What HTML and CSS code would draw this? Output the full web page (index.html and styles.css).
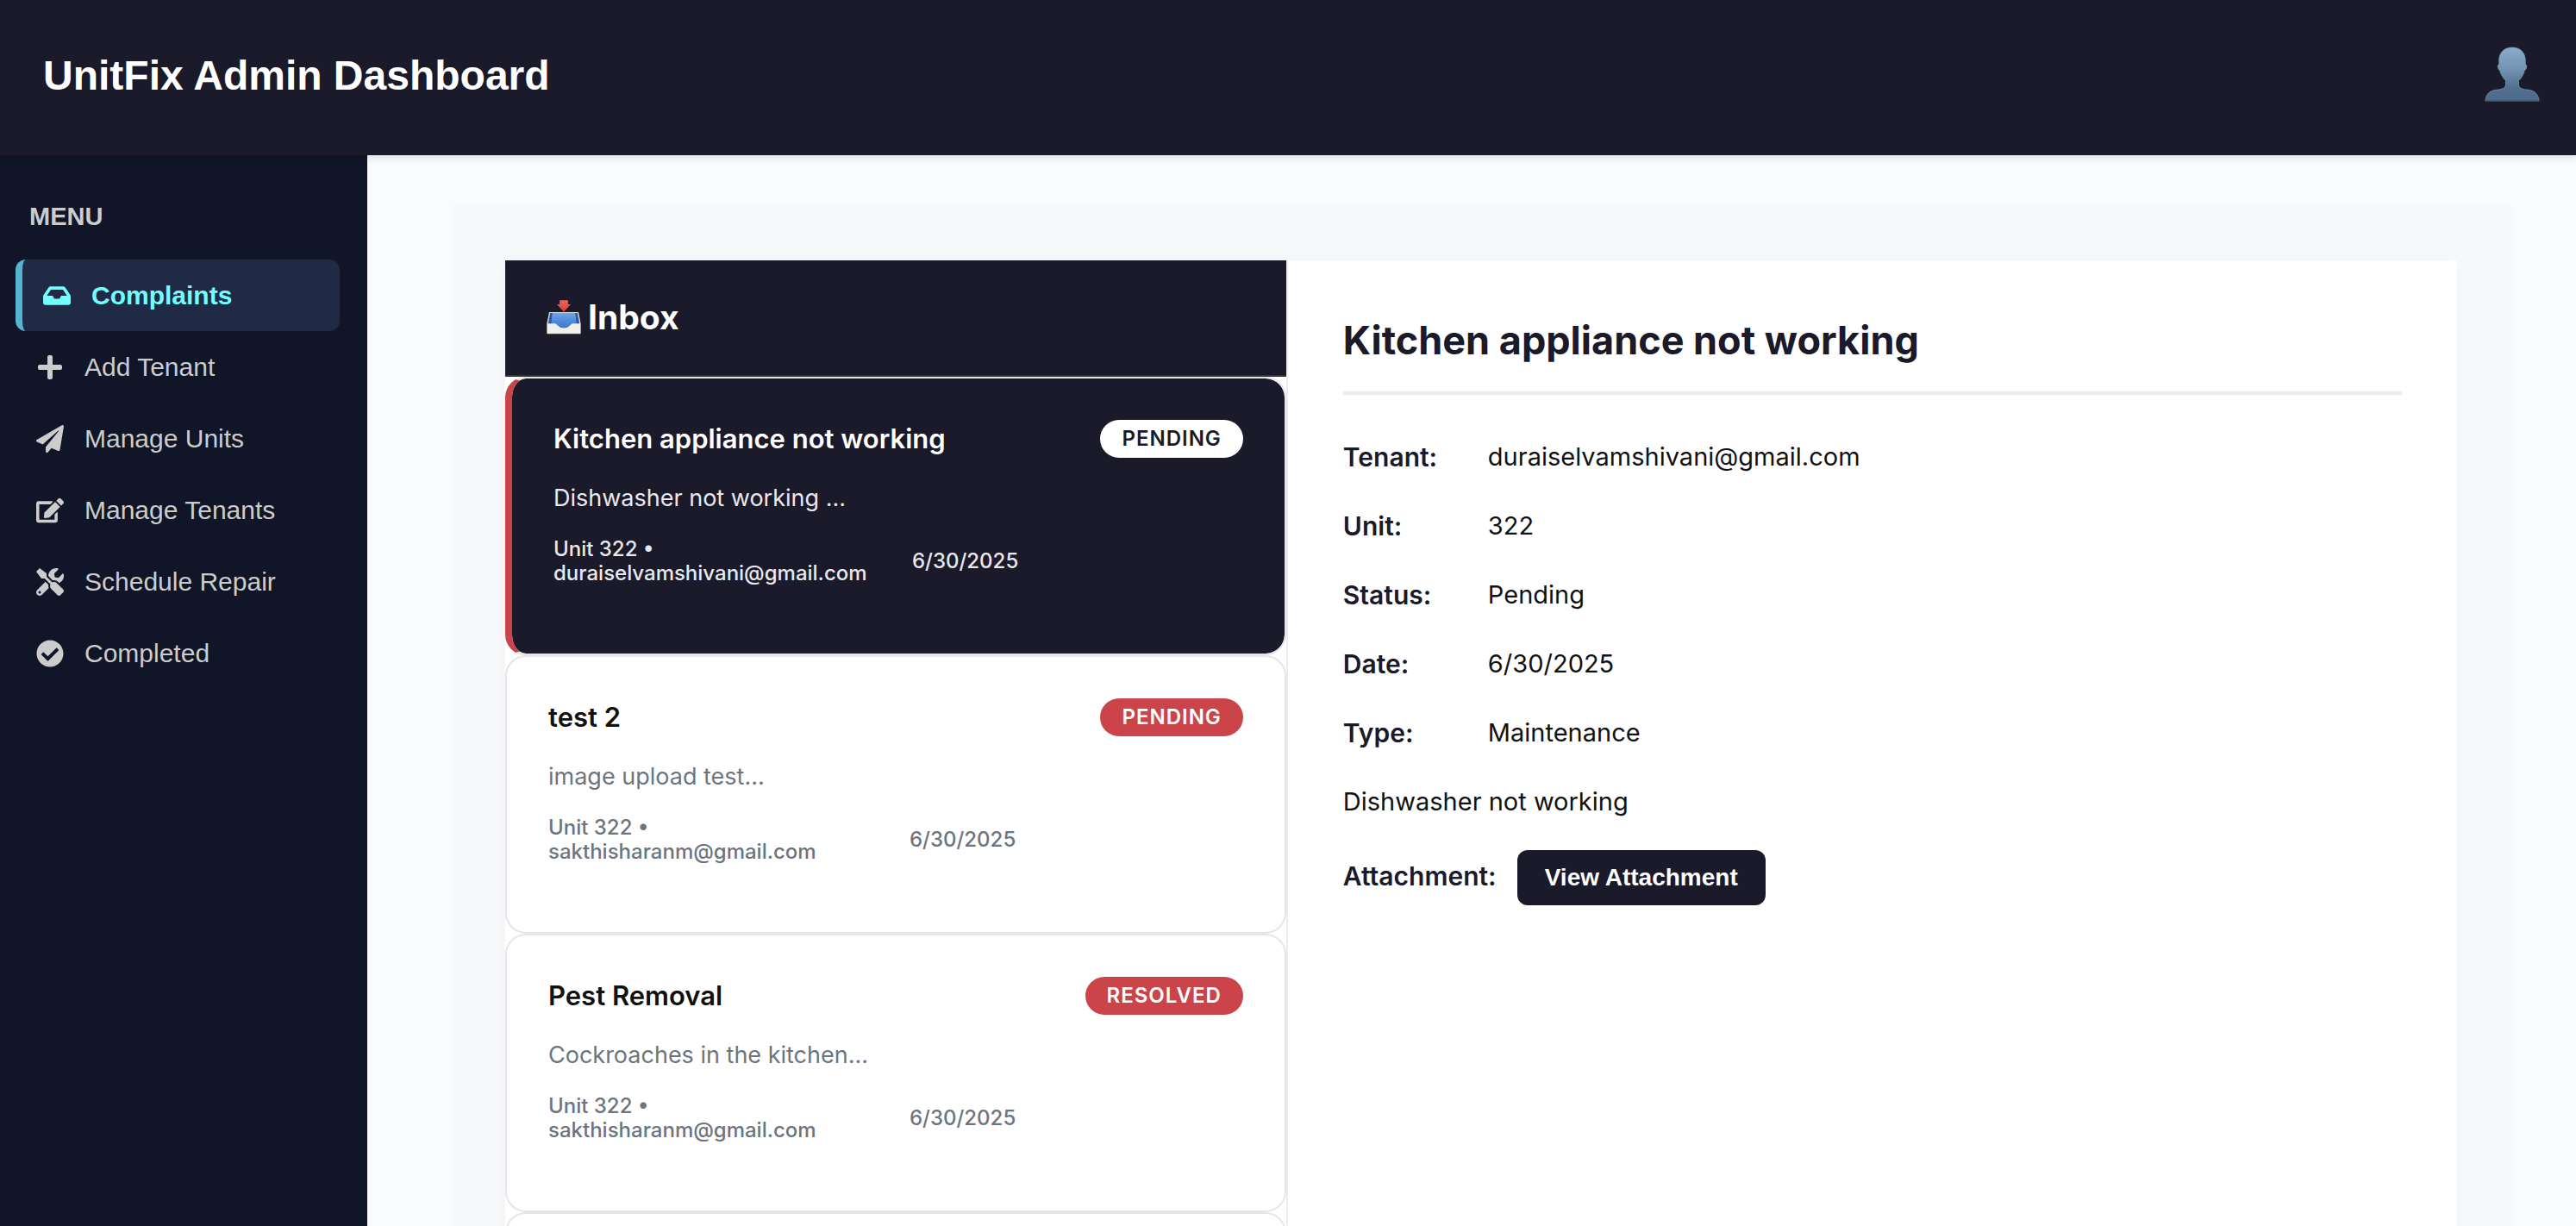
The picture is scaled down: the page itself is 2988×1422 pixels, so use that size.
FILE: index.html
```html
<!DOCTYPE html>
<html lang="en">
<head>
<meta charset="utf-8">
<meta name="viewport" content="width=device-width, initial-scale=1">
<title>UnitFix Admin Dashboard</title>
<link rel="stylesheet" href="styles.css">
</head>
<body>
<div class="app">
  <header class="topbar">
    <h1 class="topbar-title">UnitFix Admin Dashboard</h1>
    <button class="profile" type="button" aria-label="Profile">
      <svg class="profile-icon" viewBox="0 0 64 64" aria-hidden="true">
        <defs>
          <linearGradient id="bust" x1="0" y1="0" x2="0" y2="1">
            <stop offset="0" stop-color="#8aabc9"/>
            <stop offset="0.4" stop-color="#7494b3"/>
            <stop offset="0.75" stop-color="#53708f"/>
            <stop offset="1" stop-color="#4c688b"/>
          </linearGradient>
        </defs>
        <path fill="url(#bust)" stroke="#7fa9c8" stroke-width="0.6" d="M32 1C22 1 16.700 7.500 16.700 16.500V21C15 20.800 15 23.500 15.800 25.500C16.200 26.800 16.800 27.300 17.600 27.500C18.800 33 21.500 36.500 24.500 39.500V44.500C24 48.500 20 49.600 13 50.300C5.500 51 1.500 56 .8 63H63.200C62.500 56 58.500 51 51 50.300C44 49.600 40 48.500 39.500 44.500V39.500C42.500 36.500 45.200 33 46.400 27.500C47.200 27.300 47.800 26.800 48.200 25.500C49 23.500 49 20.800 47.300 21V16.500C47.300 7.500 42 1 32 1Z"/>
        <path fill="#39526f" d="M.8 62.200H63.200V63.200H.8Z"/>
      </svg>
    </button>
  </header>

  <div class="body">
    <nav class="sidebar" aria-label="Menu">
      <h2 class="sidebar-heading">MENU</h2>
      <ul class="menu">
        <li><a class="menu-link is-active" href="#complaints" aria-current="page">
          <svg class="menu-icon" viewBox="0 0 576 512" aria-hidden="true"><path d="M567.938 243.908L462.25 85.374A48.003 48.003 0 0 0 422.311 64H153.689a48 48 0 0 0-39.938 21.374L8.062 243.908A47.994 47.994 0 0 0 0 270.533V400c0 26.510 21.490 48 48 48h480c26.510 0 48-21.490 48-48V270.533a47.994 47.994 0 0 0-8.062-26.625zM162.252 128h251.497l85.333 128H376l-32 64H232l-32-64H76.918l85.334-128z"/></svg>
          Complaints</a></li>
        <li><a class="menu-link" href="#add-tenant">
          <svg class="menu-icon" viewBox="-32 0 512 512" aria-hidden="true"><path d="M416 208H272V64c0-17.670-14.330-32-32-32h-32c-17.670 0-32 14.330-32 32v144H32c-17.670 0-32 14.330-32 32v32c0 17.670 14.330 32 32 32h144v144c0 17.670 14.330 32 32 32h32c17.670 0 32-14.330 32-32V304h144c17.670 0 32-14.330 32-32v-32c0-17.670-14.330-32-32-32z"/></svg>
          Add Tenant</a></li>
        <li><a class="menu-link" href="#manage-units">
          <svg class="menu-icon" viewBox="0 0 512 512" aria-hidden="true"><path d="M476 3.200L12.500 270.600c-18.100 10.400-15.800 35.600 2.200 43.200L121 358.400l287.300-253.200c5.500-4.900 13.300 2.600 8.600 8.300L176 407v80.500c0 23.600 28.500 32.900 42.500 15.800L282 426l124.600 52.200c14.200 6 30.400-2.900 33-18.200l72-432C515 7.800 493.300-6.800 476 3.200z"/></svg>
          Manage Units</a></li>
        <li><a class="menu-link" href="#manage-tenants">
          <svg class="menu-icon" viewBox="0 0 576 512" aria-hidden="true"><path d="M402.600 83.200l90.200 90.200c3.800 3.800 3.800 10 0 13.800L274.400 405.600l-92.800 10.300c-12.400 1.400-22.900-9.100-21.500-21.500l10.300-92.800L388.800 83.200c3.800-3.800 10-3.800 13.800 0zm162-22.900l-48.800-48.800c-15.200-15.200-39.900-15.200-55.200 0l-35.400 35.400c-3.800 3.800-3.800 10 0 13.800l90.200 90.200c3.800 3.800 10 3.800 13.800 0l35.400-35.400c15.200-15.300 15.200-40 0-55.200zM384 346.200V448H64V128h229.800c3.200 0 6.200-1.300 8.500-3.500l40-40c7.600-7.600 2.200-20.500-8.500-20.500H48C21.500 64 0 85.500 0 112v352c0 26.500 21.500 48 48 48h352c26.500 0 48-21.500 48-48V306.200c0-10.700-12.900-16-20.500-8.500l-40 40c-2.200 2.300-3.500 5.300-3.500 8.500z"/></svg>
          Manage Tenants</a></li>
        <li><a class="menu-link" href="#schedule-repair">
          <svg class="menu-icon" viewBox="0 0 512 512" aria-hidden="true"><path d="M501.100 395.700L384 278.600c-23.100-23.100-57.600-27.600-85.400-13.900L192 158.100V96L64 0 0 64l96 128h62.100l106.600 106.600c-13.600 27.800-9.200 62.300 13.900 85.400l117.100 117.100c14.600 14.600 38.200 14.600 52.700 0l52.700-52.700c14.500-14.600 14.500-38.200 0-52.700zM331.700 225c28.300 0 54.900 11 74.900 31l19.400 19.400c15.800-6.900 30.800-16.500 43.800-29.500 37.100-37.100 49.700-89.300 37.900-136.700-2.200-9-13.500-12.100-20.100-5.500l-74.400 74.400-67.900-11.300L334 98.900l74.400-74.400c6.600-6.600 3.400-17.900-5.700-20.200-47.400-11.700-99.600.9-136.600 37.900-28.500 28.500-41.900 66.100-41.200 103.600l82.100 82.100c8.100-1.900 16.500-2.900 24.700-2.900zm-103.900 82l-56.700-56.700L18.700 402.800c-25 25-25 65.500 0 90.500s65.500 25 90.500 0l123.600-123.600c-7.600-19.900-9.900-41.600-5-62.700zM64 472c-13.200 0-24-10.800-24-24 0-13.300 10.700-24 24-24s24 10.700 24 24c0 13.200-10.700 24-24 24z"/></svg>
          Schedule Repair</a></li>
        <li><a class="menu-link" href="#completed">
          <svg class="menu-icon" viewBox="0 0 512 512" aria-hidden="true"><path d="M504 256c0 136.967-111.033 248-248 248S8 392.967 8 256 119.033 8 256 8s248 111.033 248 248zM227.314 387.314l184-184c6.248-6.248 6.248-16.379 0-22.627l-22.627-22.627c-6.248-6.249-16.379-6.249-22.628 0L216 308.118l-70.059-70.059c-6.248-6.248-16.379-6.248-22.628 0l-22.627 22.627c-6.248 6.248-6.248 16.379 0 22.627l104 104c6.249 6.249 16.379 6.249 22.628.001z"/></svg>
          Completed</a></li>
      </ul>
    </nav>

    <main class="content">
      <div class="page">
        <div class="mailbox">
          <section class="inbox" aria-labelledby="inbox-title">
            <header class="inbox-header">
              <svg class="inbox-icon" viewBox="0 0 40 40" aria-hidden="true">
                <defs>
                  <linearGradient id="tray" x1="0" y1="0" x2="0" y2="1">
                    <stop offset="0" stop-color="#6ea5ee"/>
                    <stop offset="0.500" stop-color="#4f8cdb"/>
                    <stop offset="1" stop-color="#3e78c6"/>
                  </linearGradient>
                  <linearGradient id="arrow" x1="0" y1="0" x2="0" y2="1">
                    <stop offset="0" stop-color="#ec6a5c"/>
                    <stop offset="1" stop-color="#d93a2f"/>
                  </linearGradient>
                </defs>
                <path fill="#d9d8d2" d="M3 14H37L39.600 27V39.300H.4V27Z"/>
                <path fill="#2d5a9e" d="M4.200 15H35.800L38 26.500V33H2V26.500Z"/>
                <path fill="url(#tray)" d="M6.800 15H33.200L34.500 26V33H5.500V26Z"/>
                <path fill="#f1f0ec" d="M.8 27.200H9.500C12.500 27.200 13 32.400 20 32.400S27.500 27.200 30.500 27.200H39.200V38.600H.8Z"/>
                <path fill="url(#arrow)" d="M15.200 .2H24.800V5H28L20 13.800L12 5H15.200Z"/>
              </svg>
              <h2 class="inbox-title" id="inbox-title">Inbox</h2>
            </header>
            <ul class="card-list">
              <li><button class="card is-selected" type="button">
                <span class="card-top"><span class="card-title">Kitchen appliance not working</span><span class="badge">PENDING</span></span>
                <span class="card-preview">Dishwasher not working ...</span>
                <span class="card-meta"><span>Unit 322 • duraiselvamshivani@gmail.com</span><span>6/30/2025</span></span>
              </button></li>
              <li><button class="card" type="button">
                <span class="card-top"><span class="card-title">test 2</span><span class="badge">PENDING</span></span>
                <span class="card-preview">image upload test...</span>
                <span class="card-meta"><span>Unit 322 • sakthisharanm@gmail.com</span><span>6/30/2025</span></span>
              </button></li>
              <li><button class="card" type="button">
                <span class="card-top"><span class="card-title">Pest Removal</span><span class="badge">RESOLVED</span></span>
                <span class="card-preview">Cockroaches in the kitchen...</span>
                <span class="card-meta"><span>Unit 322 • sakthisharanm@gmail.com</span><span>6/30/2025</span></span>
              </button></li>
              <li><div class="card"></div></li>
            </ul>
          </section>

          <article class="detail">
            <h2 class="detail-title">Kitchen appliance not working</h2>
            <dl class="fields">
              <div class="field"><dt>Tenant:</dt><dd>duraiselvamshivani@gmail.com</dd></div>
              <div class="field"><dt>Unit:</dt><dd>322</dd></div>
              <div class="field"><dt>Status:</dt><dd>Pending</dd></div>
              <div class="field"><dt>Date:</dt><dd>6/30/2025</dd></div>
              <div class="field"><dt>Type:</dt><dd>Maintenance</dd></div>
            </dl>
            <p class="description">Dishwasher not working</p>
            <div class="attachment">
              <strong>Attachment:</strong>
              <button class="attachment-button" type="button">View Attachment</button>
            </div>
          </article>
        </div>
      </div>
    </main>
  </div>
</div>
</body>
</html>
```

FILE: styles.css
```css
:root {
  --navy: #1a1a2b;
  --sidebar: #101528;
  --line: #e5e6ea;
  --red: #cb444a;
  --ui: "Liberation Sans", Arial, sans-serif;
  --text: Inter, "Liberation Sans", sans-serif;
}

* {
  box-sizing: border-box;
}

body,
h1,
h2,
p,
ul,
dl,
dd {
  margin: 0;
  padding: 0;
}

ul {
  list-style: none;
}

button {
  border: 0;
  margin: 0;
  padding: 0;
  font: inherit;
  color: inherit;
  background: none;
  cursor: pointer;
}

body {
  font-family: var(--ui);
  background: #fafbfd;
  color: #111;
}

.app {
  display: flex;
  flex-direction: column;
  height: 100vh;
  overflow: hidden;
}

/* Top bar */
.topbar {
  display: flex;
  align-items: flex-start;
  justify-content: space-between;
  flex: none;
  z-index: 1;
  padding: 54px 42px 58px 50px;
  background: var(--navy);
  box-shadow: 0 4px 8px rgba(0, 0, 0, 0.1);
}

.topbar-title {
  font-size: 48px;
  line-height: 68px;
  color: #fff;
}

.profile-icon {
  display: block;
  width: 64px;
  height: 64px;
}

.body {
  display: flex;
  flex: 1;
  min-height: 0;
}

/* Sidebar */
.sidebar {
  flex: none;
  width: 426px;
  padding: 54px 32px 0 18px;
  background: var(--sidebar);
  color: #ccc;
}

.sidebar-heading {
  margin-bottom: 32px;
  padding-left: 16px;
  font-size: 29px;
  line-height: 35px;
}

.menu-link {
  display: flex;
  align-items: center;
  gap: 24px;
  padding: 24px;
  border-radius: 12px;
  font-size: 30px;
  line-height: 35px;
  color: inherit;
  text-decoration: none;
}

.menu-link.is-active {
  border-left: 8px solid #55b5d0;
  background: #202a45;
  color: #72fdff;
  font-weight: bold;
}

.menu-icon {
  flex: none;
  width: 32px;
  height: 32px;
  fill: currentColor;
}

/* Content area */
.content {
  flex: 1;
  min-width: 0;
  padding: 58px 74px 0 96px;
}

.page {
  min-height: 100%;
  padding: 64px;
  background: #f7f9fb;
}

.mailbox {
  display: grid;
  grid-template-columns: 40.1% 1fr;
  min-height: 100vh;
  background: #fff;
  box-shadow: 0 0 16px rgba(0, 0, 0, 0.03);
  font-family: var(--text);
}

/* Inbox list */
.inbox {
  border-right: 2px solid #ebebf0;
}

.inbox-header {
  display: flex;
  align-items: center;
  gap: 8px;
  padding: 42px 48px 43px;
  border-bottom: 2px solid #333;
  background: var(--navy);
  color: #fff;
}

.inbox-icon {
  width: 40px;
  height: 40px;
}

.inbox-title {
  font-size: 39px;
  line-height: 48px;
  font-weight: 700;
}

.card {
  display: block;
  width: 100%;
  min-height: 323px;
  padding: 48px 48px 79px;
  border: 2px solid var(--line);
  border-radius: 24px;
  background: #fff;
  text-align: left;
}

.card.is-selected {
  border-left: 8px solid var(--red);
  background: var(--navy);
  background-clip: padding-box;
  color: #fff;
}

.card-top {
  display: flex;
  align-items: center;
  justify-content: space-between;
  margin-bottom: 29px;
}

.card-title {
  font-size: 31px;
  line-height: 44px;
  font-weight: 600;
}

.badge {
  padding: 8px 25px;
  border-radius: 24px;
  background: var(--red);
  font-size: 24px;
  line-height: 28px;
  font-weight: 600;
  letter-spacing: 1px;
  color: #fff;
}

.is-selected .badge {
  background: #fff;
  color: var(--navy);
}

.card-preview {
  display: block;
  margin-bottom: 28px;
  font-size: 27px;
  line-height: 35px;
  color: #6c757d;
}

.card-meta {
  display: grid;
  grid-template-columns: 1fr 1fr;
  column-gap: 32px;
  align-items: center;
  font-size: 24px;
  line-height: 28px;
  font-weight: 500;
  color: #6c757d;
}

.is-selected .card-preview,
.is-selected .card-meta {
  color: #e9e9ed;
}

/* Detail pane */
.detail {
  padding: 64px;
  font-size: 29px;
  line-height: 48px;
}

.detail-title {
  margin-bottom: 48px;
  padding-bottom: 30px;
  border-bottom: 4px solid #ebebf0;
  font-size: 45px;
  line-height: 58px;
  font-weight: 700;
  color: var(--navy);
}

.field {
  display: flex;
  margin-bottom: 32px;
}

.field dt,
.attachment strong {
  font-size: 30px;
  font-weight: 600;
  color: var(--navy);
}

.field dt {
  width: 168px;
}

.description {
  margin-bottom: 32px;
}

.attachment {
  display: flex;
  align-items: baseline;
  gap: 24px;
}

.attachment-button {
  padding: 16px 32px;
  border-radius: 12px;
  background: var(--navy);
  font-family: var(--ui);
  font-size: 28px;
  line-height: 32px;
  font-weight: bold;
  color: #fff;
}
```
